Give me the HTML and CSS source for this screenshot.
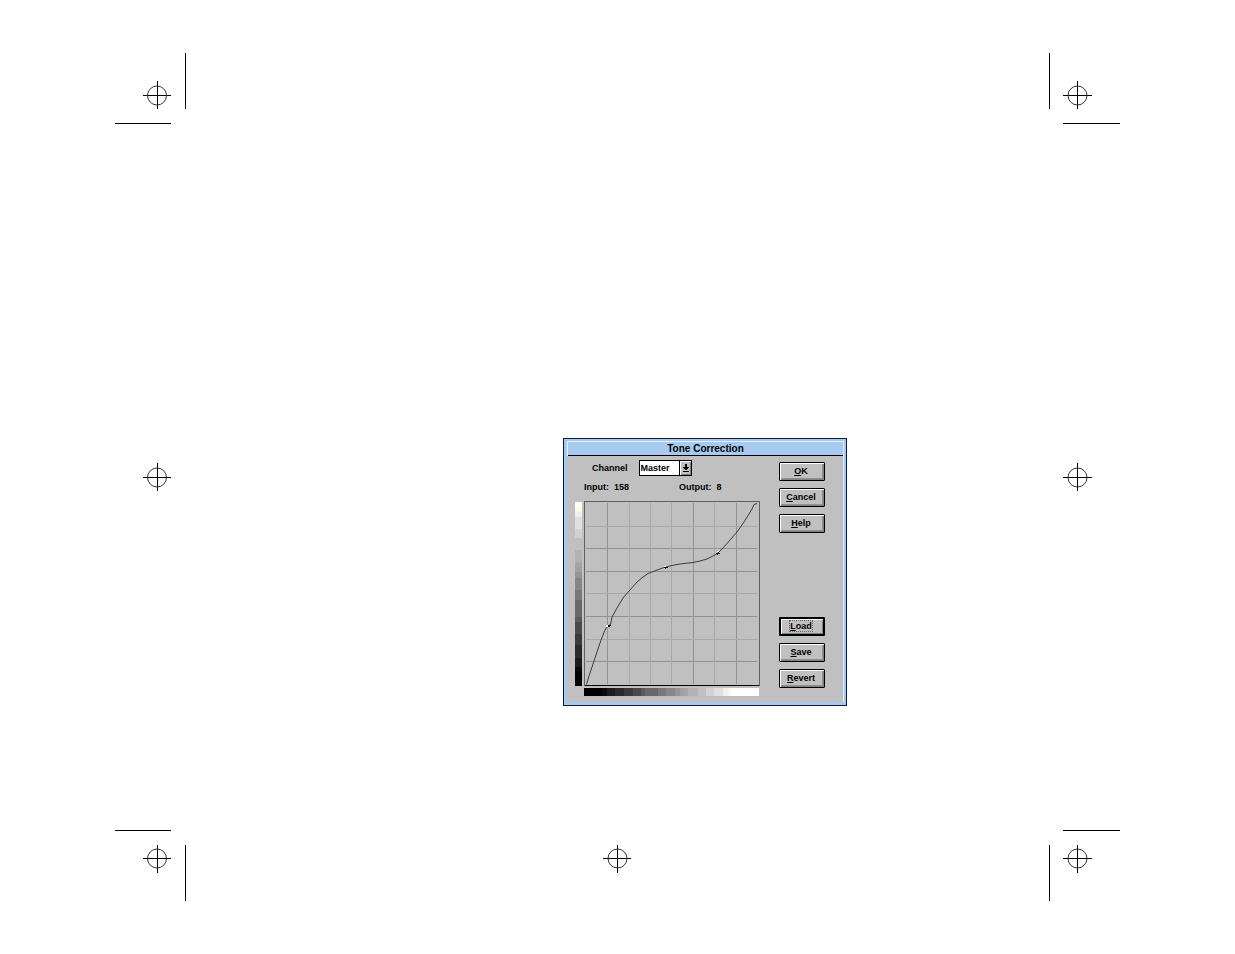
FILE: index.html
```html
<!DOCTYPE html>
<html lang="en">
<head>
<meta charset="utf-8">
<title>Tone Correction</title>
<link rel="stylesheet" href="styles.css">
</head>
<body>
<main class="sheet">
  <svg class="mark" width="71" height="71" aria-hidden="true"><path d="M70.500 0V56M0 70.500H56M28 42.500H56M42.500 28V56"/><circle cx="42" cy="42.500" r="9.500"/></svg>
  <span></span>
  <svg class="mark" width="71" height="71" aria-hidden="true"><path d="M.5 0V56M14 70.500H71M14 42.500H43M28.500 28V56"/><circle cx="28.500" cy="42.500" r="9.500"/></svg>

  <svg class="mark mark-side" width="71" height="29" aria-hidden="true"><path d="M28 14.500H56M42.500 0V28"/><circle cx="42" cy="14.500" r="9.500"/></svg>
  <div class="page">
    <section class="dialog" aria-labelledby="dialog-title">
      <div class="frame">
        <h1 class="title" id="dialog-title">Tone Correction</h1>
        <form class="content">
          <div class="settings">
            <div class="channel">
              <label for="channel">Channel</label>
              <span class="picker">
                <select id="channel"><option>Master</option></select>
                <svg class="arrow" width="12" height="15" aria-hidden="true"><path fill="#fff" d="M0 0h11v1H1v13H0z"/><path fill="#808080" d="M10 1h1v13H1v-1h9z"/><path d="M5 3h2v3h2v1H8v1H7v1H5V8H4V7H3V6h2zM3 10h6v1H3z"/></svg>
              </span>
            </div>
            <div class="readout"><span>Input:&nbsp; 158</span><span>Output:&nbsp; 8</span></div>
            <div class="plot">
              <div class="scale scale-output"></div>
              <svg class="graph" viewBox="584 501 176 185" role="img" aria-label="Tone curve">
                <path class="grid-dark" d="M607.500 503V684M693.500 503V684M736.500 503V684M586 548.500H757M586 571.500H757M586 616.500H757M586 661.500H757"/>
                <path class="grid-light" d="M629.500 503V684M650.500 503V684M671.500 503V684M714.500 503V684M586 526.500H757M586 593.500H757M586 639.500H757"/>
                <path class="edge" d="M584.500 686V501.500H759.500V686"/>
                <path class="base" d="M585 685.500H759"/>
                <path class="curve" d="M586.500 684.500L589 676L593 664L597 652L601 640L605 630L607.500 626L610.500 624.500L612 617L617 608L623 598L630 590L637 582L643 577L648 573.500L656 570.500L661 568.500L666 567L672 565.500L680 564L693 562.500L700 561L707 559L713 556L718 553L723 548L730 540L737 532L744 522L749 514L752 509L754 504.500L757 503.500"/>
                <path class="glint" d="M606 625h2v2h-2zM664 566h2v1h-2zM717 551h2v1h-2z"/>
                <path class="node" d="M608 625h3v1h-1v1h-2zM664 567h4v1h-2v1h-1v-1h-1zM716 553h4v1h-2v1h-1v-1h-1z"/>
              </svg>
              <div class="scale scale-input"></div>
            </div>
          </div>
          <div class="actions">
            <div class="group">
              <button type="button"><u>O</u>K</button>
              <button type="button"><u>C</u>ancel</button>
              <button type="button"><u>H</u>elp</button>
            </div>
            <div class="group">
              <button type="button" class="current"><span><u>L</u>oad</span></button>
              <button type="button"><u>S</u>ave</button>
              <button type="button"><u>R</u>evert</button>
            </div>
          </div>
        </form>
      </div>
    </section>
  </div>
  <svg class="mark mark-side" width="71" height="29" aria-hidden="true"><path d="M14 14.500H43M28.500 0V28"/><circle cx="28.500" cy="14.500" r="9.500"/></svg>

  <svg class="mark" width="71" height="71" aria-hidden="true"><path d="M70.500 15V71M0 .5H56M28 28.500H56M42.500 15V43"/><circle cx="42" cy="28.500" r="9.500"/></svg>
  <svg class="mark mark-bottom" width="29" height="71" aria-hidden="true"><path d="M0 28.500H28M14.500 15V43"/><circle cx="14.500" cy="28.500" r="9.500"/></svg>
  <svg class="mark" width="71" height="71" aria-hidden="true"><path d="M.5 15V71M14 .5H71M14 28.500H43M28.500 15V43"/><circle cx="28.500" cy="28.500" r="9.500"/></svg>
</main>
</body>
</html>
```
FILE: styles.css
```css
* { box-sizing: border-box; }

body {
  margin: 0;
  background: #fff;
  color: #000;
  font: bold 9px/11px "Liberation Sans", Arial, sans-serif;
}

.sheet {
  display: grid;
  grid-template: auto 1fr auto / auto 1fr auto;
  min-height: 100vh;
  padding: 53px 115px;
}

.mark { display: block; fill: none; stroke: #000; }
.mark path { shape-rendering: crispEdges; }
.mark circle { stroke: #333; }
.mark-side { align-self: center; }
.mark-bottom { justify-self: center; }

/* The dialog sits low and right of centre on the printed page. */
.page {
  display: grid;
  grid-template: 314fr auto 124fr / 377fr auto 202fr;
}

.dialog {
  grid-area: 2 / 2;
  padding: 2px 2px 3px 3px;
  border: 1px solid #101830;
  background: #a6caf0;
}

.frame { border-right: 1px solid #d8ecff; background: #c0c0c0; }

.title {
  margin: 0;
  border: solid #e4f2ff;
  border-width: 1px 0 0 1px;
  box-shadow: inset 0 -1px #000;
  background: #a6caf0;
  font-size: 10px;
  line-height: 14px;
  text-align: center;
}

.content {
  display: flex;
  gap: 19px;
  padding: 4px 18px 6px 8px;
}

.channel {
  display: flex;
  align-items: center;
  gap: 11px;
  padding-left: 17px;
}

.picker { display: flex; border: 1px solid #000; background: #c0c0c0; }

.picker select {
  width: 40px;
  height: 14px;
  padding: 0 0 0 1px;
  border: 0;
  border-right: 1px solid #000;
  border-radius: 0;
  appearance: none;
  background: #fff;
  color: #000;
  font: inherit;
}

.arrow { width: 11px; height: 14px; }

.readout {
  display: grid;
  grid-template-columns: 95px auto;
  padding: 6px 0 8px 9px;
}

.plot {
  display: grid;
  grid-template-columns: 7px 176px;
  gap: 2px;
}

.graph { display: block; width: 100%; fill: none; }
.graph path { shape-rendering: crispEdges; }
.grid-dark { stroke: #929292; }
.grid-light { stroke: #a8a8a8; }
.edge { stroke: #606060; }
.base { stroke: #000; }
.graph .curve { stroke: #3c3c3c; shape-rendering: auto; }
.glint { fill: #fff; }
.node { fill: #000; }

.scale-output {
  margin-top: 1px;
  background: linear-gradient(to bottom,
    #fff 5px, #fff8ea 5px 10px, #eee 10px 15px, #e0e0e0 15px 27px,
    #d0d0d0 27px 36px, #c0c0c0 36px 48px, #b2b2b2 48px 60px,
    #a6a6a6 60px 65px, #a0a0a4 65px 70px, #949494 70px 76px,
    #868686 76px 88px, #787878 88px 98px, #686868 98px 115px,
    #5a5a5a 115px 120px, #4a4a4a 120px 132px, #3a3a3a 132px 143px,
    #2b2b2b 143px 156px, #1c1c1c 156px 165px, #0a0a0a 165px 169px, #000 169px);
}

.scale-input {
  grid-column: 2;
  height: 8px;
  margin-right: 1px;
  background: linear-gradient(to right,
    #000 18px, #0a0a0a 18px 23px, #1c1c1c 23px 31px, #2b2b2b 31px 40px,
    #3a3a3a 40px 49px, #4a4a4a 49px 57px, #5a5a5a 57px 61px,
    #686868 61px 74px, #787878 74px 82px, #868686 82px 91px,
    #949494 91px 96px, #a0a0a4 96px 100px, #a6a6a6 100px 104px,
    #b2b2b2 104px 114px, #c0c0c0 114px 122px, #d2d2d2 122px 130px,
    #e0e0e0 130px 139px, #f0f0f0 139px 144px, #fff8ea 144px 147px, #fff 147px);
}

.actions {
  display: flex;
  flex-direction: column;
  justify-content: space-between;
  padding: 2px 0 8px;
}

.group { display: grid; gap: 7px; }

.actions button {
  width: 46px;
  height: 19px;
  padding: 0 2px 0 0;
  border: 1px solid #000;
  border-radius: 1px;
  box-shadow: inset 1px 1px #fff, inset -1px -1px #808080, inset -2px -2px #909090;
  background: #c0c0c0;
  color: #000;
  font: inherit;
}

.actions .current {
  border-width: 2px;
  box-shadow: inset 1px 1px #fff, inset -1px -1px #808080;
}

.current span { outline: 1px dotted #606060; }
```
